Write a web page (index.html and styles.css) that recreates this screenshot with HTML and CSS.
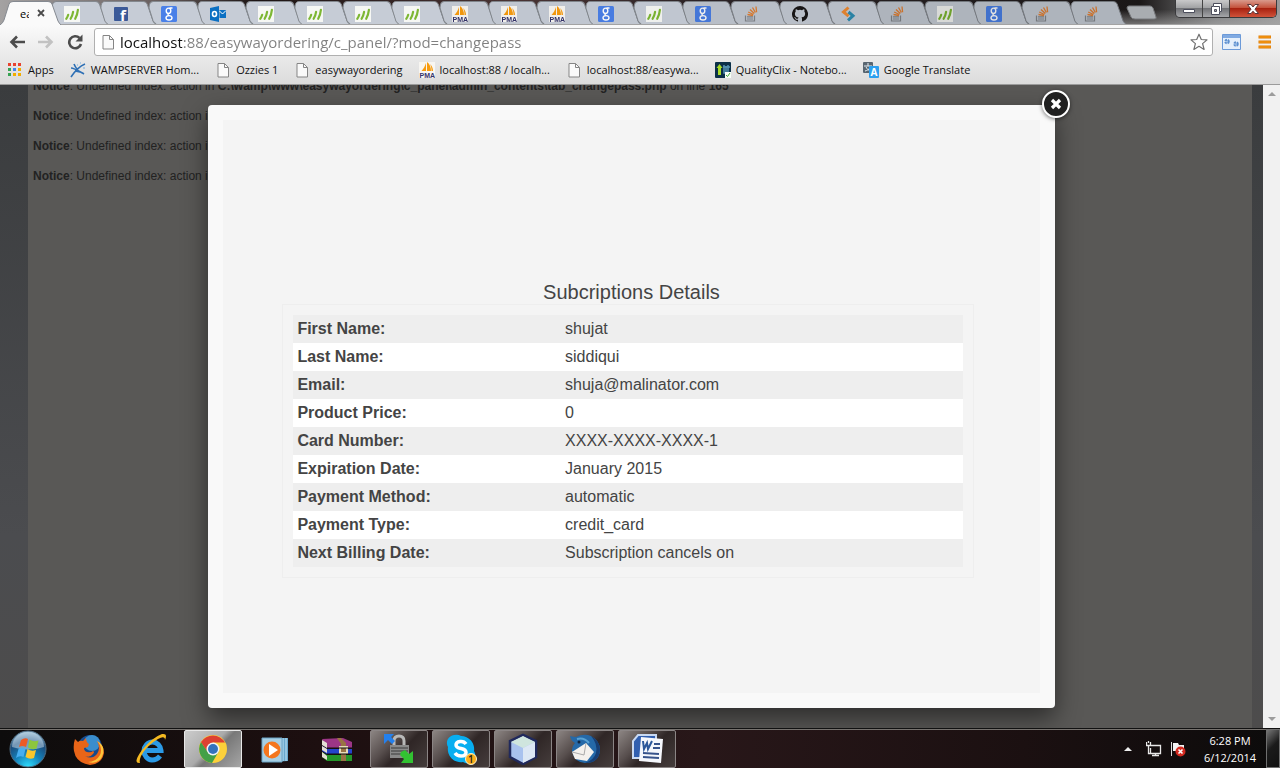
FILE: index.html
```html
<!DOCTYPE html>
<html lang="en">
<head>
<meta charset="utf-8">
<title>easywayordering</title>
<link rel="stylesheet" href="styles.css">
</head>
<body>
<svg class="sprite" aria-hidden="true">
  <symbol id="bars" viewBox="0 0 16 16"><path fill="#f6f7f4" d="M0 0h16v16H0z"/><path d="M2.300 12.800q1.200-1.500 1.900-4M6.600 12.800q2-3.500 2.500-7M11.200 12.800q2.200-4 2.700-9" fill="none" stroke="#7db733" stroke-width="2.200" stroke-linecap="round"/></symbol>
  <symbol id="fb" viewBox="0 0 16 16"><rect x="1" y="1" width="14" height="14" rx="1" fill="#3b5998"/><text x="7" y="15" font-family="Open Sans, sans-serif" font-weight="700" font-size="15" fill="#fff">f</text></symbol>
  <symbol id="goog" viewBox="0 0 16 16"><rect width="16" height="16" rx="1.500" fill="#4a80e8"/><g fill="none" stroke="#fff" stroke-width="1.400"><ellipse cx="7.500" cy="4.800" rx="2.300" ry="2.700"/><path d="M8.500 2H11.500M8 7.500q-2 1.200 0 2.200"/><ellipse cx="8" cy="11.800" rx="3" ry="2.200"/></g></symbol>
  <symbol id="outl" viewBox="0 0 16 16"><path fill="#0b6fc2" d="M0 2 9 0v16L0 14z"/><path fill="#0b6fc2" d="M9.500 4H16v8H9.500z"/><path d="m9.500 5 3 3L16 4.500" fill="none" stroke="#fff"/><ellipse cx="4.500" cy="8" rx="2" ry="2.500" fill="none" stroke="#fff" stroke-width="1.600"/></symbol>
  <symbol id="pma" viewBox="0 0 16 16"><path fill="#f8f6f2" d="M0 0h16v16H0z"/><path fill="#f89c0e" d="M7 1v8H2.500C4.500 7 6 4 7 1zM8 0c3 2 4 6 4 9H8zM11 2c2 2 3 4 3 7h-1.500C12.500 6 12 4 11 2z"/><text x="0.500" y="16" font-family="Liberation Sans, sans-serif" font-weight="700" font-size="7" fill="#34346b">PMA</text></symbol>
  <symbol id="so" viewBox="0 0 16 16"><path d="M2.500 9.500v5.500h9V9.500M4 13h6M4 10.800h6" fill="none" stroke="#84888d" stroke-width="1.200"/><path d="m4.500 8.500 5.500 1M5.200 6l5.200 2.500M7 3.500l4.300 3.900M9.500 1.500l2.900 5M13 .5l.6 5.800" stroke="#e58132" stroke-width="1.300"/></symbol>
  <symbol id="gh" viewBox="0 0 16 16"><path fill="#191717" d="M8 0a8 8 0 0 0-2.530 15.590c.4.070.55-.17.55-.38v-1.490c-2.230.48-2.700-.95-2.700-.95-.36-.92-.89-1.170-.89-1.170-.73-.5.050-.49.050-.49.810.060 1.230.83 1.230.83.720 1.230 1.880.87 2.340.67.070-.52.280-.87.510-1.070-1.780-.2-3.640-.89-3.640-3.950 0-.87.310-1.590.820-2.150-.08-.2-.36-1.020.080-2.120 0 0 .67-.21 2.200.82a7.600 7.600 0 0 1 4 0c1.530-1.040 2.200-.82 2.200-.82.440 1.100.160 1.920.080 2.120.510.560.820 1.270.820 2.150 0 3.070-1.870 3.750-3.650 3.950.290.250.540.730.540 1.480v2.190c0 .21.150.46.550.38A8 8 0 0 0 8 0z"/></symbol>
  <symbol id="sublime" viewBox="0 0 16 16"><path d="M8.500 1.500 3.500 6l5 4.200" fill="none" stroke="#ef8b32" stroke-width="3"/><path d="M8.500 6 13 9.800l-5 4.500" fill="none" stroke="#2d8cb0" stroke-width="3"/></symbol>
  <symbol id="doc" viewBox="0 0 16 16"><path d="M3 1.500h6.500l4 4v9.500H3z" fill="#fafafa" stroke="#858585"/><path d="M9.500 1.500v4h4" fill="none" stroke="#858585"/></symbol>
  <symbol id="apps" viewBox="0 0 16 16"><path fill="#e8432f" d="M1 1h3v3H1zM6 1h3v3H6zM11 1h3v3h-3z"/><path fill="#36a352" d="M1 6h3v3H1zM1 11h3v3H1z"/><path fill="#4285ee" d="M6 6h3v3H6z"/><path fill="#f2ad00" d="M11 6h3v3h-3zM6 11h3v3H6zM11 11h3v3h-3z"/></symbol>
  <symbol id="wamp" viewBox="0 0 16 16"><path d="M1 15C5 9 10 4 15 2M1 6c3 0 6 2 13 6M4 2c1 3 2 4 4 6M5 9l5 1" fill="none" stroke="#2f70b5" stroke-width="1.600"/><path d="M7 3h1M10 1h1M13 6h2" stroke="#75aee0"/></symbol>
  <symbol id="qc" viewBox="0 0 16 16"><rect width="16" height="16" rx="1" fill="#0b3048"/><path d="m4.500 2 3 4H6v7H3V6H1.500z" fill="#a8dc28"/><path d="M8 5h7M9 3v8h2V4M13 3v7" stroke="#5794b5" stroke-width="1.500" fill="none"/><path fill="#f8fff8" d="M10 10h6v6h-6z"/><path d="m11 13 1.500 1.500L15 11" fill="none" stroke="#41aa35"/></symbol>
  <symbol id="trans" viewBox="0 0 16 16"><rect width="10" height="11" rx="1" fill="#586570"/><path d="M1 4h8M5 1v3M2 9c4-1 5-3 5-5M3 5c1 2 3 4 5 4" stroke="#e4edf2" fill="none"/><rect x="6" y="4" width="10" height="12" rx="1" fill="#2b9ff0"/><text x="7.500" y="14" font-family="Open Sans, sans-serif" font-size="10" font-weight="700" fill="#fff">A</text></symbol>
</svg>

<header class="chrome">
  <div class="strip">
    <nav class="tabs" aria-label="Tabs">
      <div class="tab active"><span>ea</span><button class="x" aria-label="Close tab"><svg viewBox="0 0 8 8"><path d="m1 1 6 6M7 1 1 7" stroke="#4b4b4b" stroke-width="1.800"/></svg></button></div>
      <button class="tab" aria-label="Tab"><svg><use href="#bars"/></svg></button>
      <button class="tab" aria-label="Tab"><svg><use href="#fb"/></svg></button>
      <button class="tab" aria-label="Tab"><svg><use href="#goog"/></svg></button>
      <button class="tab" aria-label="Tab"><svg><use href="#outl"/></svg></button>
      <button class="tab" aria-label="Tab"><svg><use href="#bars"/></svg></button>
      <button class="tab" aria-label="Tab"><svg><use href="#bars"/></svg></button>
      <button class="tab" aria-label="Tab"><svg><use href="#bars"/></svg></button>
      <button class="tab" aria-label="Tab"><svg><use href="#bars"/></svg></button>
      <button class="tab" aria-label="Tab"><svg><use href="#pma"/></svg></button>
      <button class="tab" aria-label="Tab"><svg><use href="#pma"/></svg></button>
      <button class="tab" aria-label="Tab"><svg><use href="#pma"/></svg></button>
      <button class="tab" aria-label="Tab"><svg><use href="#goog"/></svg></button>
      <button class="tab" aria-label="Tab"><svg><use href="#bars"/></svg></button>
      <button class="tab" aria-label="Tab"><svg><use href="#goog"/></svg></button>
      <button class="tab" aria-label="Tab"><svg><use href="#so"/></svg></button>
      <button class="tab" aria-label="Tab"><svg><use href="#gh"/></svg></button>
      <button class="tab" aria-label="Tab"><svg><use href="#sublime"/></svg></button>
      <button class="tab" aria-label="Tab"><svg><use href="#so"/></svg></button>
      <button class="tab" aria-label="Tab"><svg><use href="#bars"/></svg></button>
      <button class="tab" aria-label="Tab"><svg><use href="#goog"/></svg></button>
      <button class="tab" aria-label="Tab"><svg><use href="#so"/></svg></button>
      <button class="tab" aria-label="Tab"><svg><use href="#so"/></svg></button>
    </nav>
    <button class="newtab" aria-label="New tab"><svg viewBox="0 0 32 16"><path d="M3 1h21q2 0 3 2l3 9q1 2-2 2H9q-3 0-4-2L1 3q0-2 2-2z" fill="#a9adb1" stroke="#77797c"/></svg></button>
    <div class="winctl">
      <button aria-label="Minimize"><svg viewBox="0 0 14 14"><path d="M1.500 7.500h11v3h-11z" fill="#fff" stroke="#4c4e5c"/></svg></button>
      <button aria-label="Restore"><svg viewBox="0 0 14 14"><path d="M4.500 1.500h8v8h-2v3h-8v-8h2z" fill="#fff" stroke="#4c4e5c"/><path d="M5.500 7.500h2v2h-2z" fill="#aaa" stroke="#4c4e5c"/><path d="M5 4.500h5.500V9" fill="none" stroke="#4c4e5c"/></svg></button>
      <button class="close" aria-label="Close"><svg viewBox="0 0 14 14"><path d="M1.500 2.500h3.500l2 2.500 2-2.500h3.500L9 7.200l3.500 4.300H9L7 9.200l-2 2.300H1.500L5 7.200z" fill="#fff" stroke="#5b3538"/></svg></button>
    </div>
  </div>
  <div class="toolbar">
    <button class="nav" aria-label="Back"><svg viewBox="0 0 16 16"><path d="M16 8H3M8 2.500 2.500 8 8 13.500" fill="none" stroke="#4c4c4c" stroke-width="2.600"/></svg></button>
    <button class="nav" aria-label="Forward"><svg viewBox="0 0 16 16"><path d="M0 8h13M8 2.500 13.500 8 8 13.500" fill="none" stroke="#c2c2c2" stroke-width="2.600"/></svg></button>
    <button class="nav" aria-label="Reload"><svg viewBox="0 0 16 16"><path d="M12.500 4A6 6 0 1 0 14 10" fill="none" stroke="#4c4c4c" stroke-width="2.600"/><path d="M15.500.5v7h-7z" fill="#4c4c4c"/></svg></button>
    <div class="omnibox">
      <svg class="ic"><use href="#doc"/></svg>
      <input class="url" type="text" aria-label="Address" value="localhost:88/easywayordering/c_panel/?mod=changepass">
      <button class="star" aria-label="Bookmark this page"><svg viewBox="0 0 18 18"><path d="m9 1.200 2.300 5.300 5.700.4-4.400 3.700 1.500 5.800L9 13.300l-5.100 3.100 1.500-5.800L1 6.900l5.700-.4z" fill="#fff" stroke="#6f6f6f" stroke-width="1.200" stroke-linejoin="round"/></svg></button>
    </div>
    <button class="ext" aria-label="Extension"><svg viewBox="0 0 20 16"><path d="M.5.5h18v15H.5z" fill="#e6f0fb" stroke="#6c9ad8"/><path fill="#80aae2" d="M1 1h17v3H1z"/><circle cx="5" cy="7.500" r="1.800" fill="#b5d0ef" stroke="#5e90cf" stroke-width="2" stroke-dasharray="2 .8"/><circle cx="14" cy="10" r="1.800" fill="#b5d0ef" stroke="#5e90cf" stroke-width="2" stroke-dasharray="2 .8"/></svg></button>
    <button class="menu" aria-label="Menu"><svg viewBox="0 0 14 14"><path d="M.5 2h12.500M.5 7h12.500M.5 12h12.500" stroke="#e07b00" stroke-width="3"/><path d="M1 2h11.500M1 7h11.500M1 12h11.500" stroke="#fba21d"/></svg></button>
  </div>
  <nav class="bookmarks" aria-label="Bookmarks">
    <a href="#"><svg class="ic"><use href="#apps"/></svg>Apps</a>
    <a href="#"><svg class="ic"><use href="#wamp"/></svg>WAMPSERVER Hom...</a>
    <a href="#"><svg class="ic"><use href="#doc"/></svg>Ozzies 1</a>
    <a href="#"><svg class="ic"><use href="#doc"/></svg>easywayordering</a>
    <a href="#"><svg class="ic"><use href="#pma"/></svg>localhost:88 / localh...</a>
    <a href="#"><svg class="ic"><use href="#doc"/></svg>localhost:88/easywa...</a>
    <a href="#"><svg class="ic"><use href="#qc"/></svg>QualityClix - Notebo...</a>
    <a href="#"><svg class="ic"><use href="#trans"/></svg>Google Translate</a>
  </nav>
</header>

<div class="view">
  <main class="stage">
    <div class="page">
      <p><b>Notice</b>: Undefined index: action in <b>C:\wamp\www\easywayordering\c_panel\admin_contents\tab_changepass.php</b> on line <b>165</b></p>
      <p><b>Notice</b>: Undefined index: action in</p>
      <p><b>Notice</b>: Undefined index: action in</p>
      <p><b>Notice</b>: Undefined index: action in</p>
    </div>
    <section class="modal" role="dialog" aria-labelledby="title">
      <button class="dismiss" aria-label="Close"><svg viewBox="0 0 30 30"><circle cx="15" cy="15" r="13" fill="#202020" stroke="#fff" stroke-width="2"/><path d="m11 11 8 8M19 11l-8 8" stroke="#fff" stroke-width="3.200"/></svg></button>
      <div class="inner">
        <h1 id="title">Subcriptions Details</h1>
        <div class="box">
          <table>
            <tbody>
              <tr><th scope="row">First Name:</th><td>shujat</td></tr>
              <tr><th scope="row">Last Name:</th><td>siddiqui</td></tr>
              <tr><th scope="row">Email:</th><td>shuja@malinator.com</td></tr>
              <tr><th scope="row">Product Price:</th><td>0</td></tr>
              <tr><th scope="row">Card Number:</th><td>XXXX-XXXX-XXXX-1</td></tr>
              <tr><th scope="row">Expiration Date:</th><td>January 2015</td></tr>
              <tr><th scope="row">Payment Method:</th><td>automatic</td></tr>
              <tr><th scope="row">Payment Type:</th><td>credit_card</td></tr>
              <tr><th scope="row">Next Billing Date:</th><td>Subscription cancels on</td></tr>
            </tbody>
          </table>
        </div>
      </div>
    </section>
  </main>
  <div class="scroll" aria-hidden="true">
    <svg viewBox="0 0 8 4"><path d="M0 4 4 0l4 4z" fill="#9c9c9c"/></svg>
    <svg viewBox="0 0 8 4"><path d="M0 0h8L4 4z" fill="#9c9c9c"/></svg>
  </div>
</div>

<footer class="taskbar">
  <button class="start" aria-label="Start"><svg viewBox="0 0 38 38">
    <defs><radialGradient id="orb" cx=".5" cy="1" r=".95"><stop offset="0" stop-color="#2fe0ff"/><stop offset=".4" stop-color="#1583bb"/><stop offset=".75" stop-color="#1b4c7c"/><stop offset="1" stop-color="#8db4cc"/></radialGradient></defs>
    <circle cx="19" cy="19" r="18" fill="url(#orb)" stroke="#4d6a80"/><path d="M3 17a16 15 0 0 1 32 0q-16 5-32 0z" fill="#cfe2ee" opacity=".5"/>
    <path d="M12 10q4-3 7-1l-2 8q-4-2-7 0z" fill="#ec5a25"/><path d="M20.500 9.500q4 3 9 1l-2 8q-4 2-8.500-1z" fill="#8cc63e"/><path d="M9.500 19q4-2 7 0l-2 8q-4-2-7.500 1z" fill="#46aef0"/><path d="M18.500 19q4 3 8.500 1l-2 8q-4 2-8.500-1z" fill="#fcc62c"/></svg></button>
  <button class="task" aria-label="Firefox"><svg viewBox="0 0 32 32"><circle cx="17" cy="14" r="12" fill="#174a8c"/><circle cx="19" cy="10" r="8" fill="#3a8dcd"/><path d="M2 6l3 3q2-2 5-1l3-3q0 4 3 6l-1 3-4 1q0 3 3 4 4 1 6-1 2 1 0 3-3 4-8 2 7 4 12-2 4-6 0-13 7 4 7 12-2 11-14 12Q3 30 1 18q-1-6 1-12z" fill="#e96518"/><path d="M24 8q6 6 3 14-4 7-12 7 12 3 15-8 2-9-6-13z" fill="#fcc53a"/></svg></button>
  <button class="task" aria-label="Internet Explorer"><svg viewBox="0 0 32 32"><path d="M25 23q-3 4-8 4a8.500 9 0 1 1 9-9.500H9" fill="none" stroke="#2b9ae6" stroke-width="5"/><path d="M5 30q-8 1 2-13Q18 4 27 1q6-1 3 6 0-5-7-1Q12 12 6 23q-2 5-1 7z" fill="#f5b921"/></svg></button>
  <button class="task on current" aria-label="Chrome"><svg viewBox="0 0 32 32"><circle cx="16" cy="16" r="14" fill="#fcd03a"/><path d="M4 9a14 14 0 0 0 11 21l7-12-11 1z" fill="#43a047"/><path d="M4 9A14 14 0 0 1 28 9.500H16L10 18z" fill="#dd4132"/><circle cx="16" cy="16" r="6.500" fill="#f2f4f6"/><circle cx="16" cy="16" r="5" fill="#3472bd"/></svg></button>
  <button class="task" aria-label="Media Player"><svg viewBox="0 0 32 32"><path d="M10 5h19v23l-19 1z" fill="#69a8cd"/><path d="M24 5v23M27 5v23" stroke="#c4e3f4"/><path d="M3 5h20v24H3z" fill="#a7cfe4" stroke="#6ba3c4"/><circle cx="13" cy="17" r="8.500" fill="#f4761e"/><path d="m10 11 9 6-9 6z" fill="#fff"/></svg></button>
  <button class="task" aria-label="WinRAR"><svg viewBox="0 0 32 32"><path d="m1 6 21-1 9 4v6H6z" fill="#9c3686"/><path d="M1 13 6 16h25v5H6l-5-3z" fill="#2444cc"/><path d="m1 19 5 3h25v6H6l-5-4z" fill="#24962a"/><path d="m1 7 5 3v5l-5-3zM1 13l5 3v4l-5-3zM1 19l5 4v4l-5-3z" fill="#e5dfd5"/><path d="M16 5h4l5 5v18h-5V11z" fill="#997344"/><path d="M19 14h7v6h-7z" fill="none" stroke="#e7dcb8" stroke-width="2"/><path d="M6 15h25M6 21h25" stroke="#111"/></svg></button>
  <button class="task on" aria-label="Secure transfer"><svg viewBox="0 0 32 32"><path d="M11 14V8q0-5 5-5t5 5v6" fill="none" stroke="#b8b8b8" stroke-width="3"/><path d="M7 12h19v13H7z" fill="#8a8a8a"/><path d="M8 15h17M8 18h17M8 21h17" stroke="#555" stroke-width="1.500"/><path d="M1 1h10L8 4l4 4-3 3-4-4-4 4z" fill="#2480ed"/><path d="m18 19 4-2 4 4 4-3v12H18l3-4-4-4z" fill="#32c232"/></svg></button>
  <button class="task on" aria-label="Skype"><svg viewBox="0 0 32 32"><path d="M9 2q4-1 7 1a13 13 0 0 1 13 15 8 8 0 0 1-11 11A13 13 0 0 1 3 14 8 8 0 0 1 9 2z" fill="#08aef0"/><path d="M21 11q-2-3-6-2.500-4 .5-4 3.500 0 2.500 5 3.500t5 4q0 3.500-5 3.500-4 0-6-3" fill="none" stroke="#fff" stroke-width="3.500"/><circle cx="26" cy="26" r="5.500" fill="#fcae18" stroke="#fff2c8"/><text x="23" y="29.500" font-family="Open Sans, sans-serif" font-size="10" font-weight="600" fill="#222">1</text></svg></button>
  <button class="task on" aria-label="VirtualBox"><svg viewBox="0 0 32 32"><path d="m16 2 13 6v16l-13 7-13-7V8z" fill="#a9c2ee" stroke="#20295c" stroke-width="2.500"/><path d="m16 3 12 6-12 6L4 9z" fill="#cfe5de"/><path d="m16 15 12-6v15l-12 6z" fill="#dce7f4"/></svg></button>
  <button class="task on" aria-label="Thunderbird"><svg viewBox="0 0 32 32"><path d="M1 3q4 1 6 1 8-4 15-1 9 5 9 14-1 13-15 13Q5 29 3 18q0-5 3-8-4-2-5-7z" fill="#2569a8"/><path d="M22 3q9 5 9 14-1 13-15 13 9-3 11-10 2-9-5-17z" fill="#173f75"/><path d="M8 6q7-2 12 4" fill="none" stroke="#58a2d4" stroke-width="2"/><circle cx="10" cy="9" r="1.500" fill="#102540"/><path d="m3 19 14-9 8 9-7 9-12-2z" fill="#f4f1ed"/><path d="m3 19 12 3 2-12" fill="none" stroke="#aaa"/></svg></button>
  <button class="task on" aria-label="Word"><svg viewBox="0 0 32 32"><path d="M7 2h18v23H2V8z" fill="#315fb0" stroke="#c9d9f2" stroke-width="2"/><path d="m10 4 22 2-2 24-22-2z" fill="#f5f7fc"/><path d="M23 11h6M22 15h7M12 20l16 1M12 24l16 1" stroke="#37538b" stroke-width="2"/><path d="m12 8 1 8 3-6 1 6 4-8" fill="none" stroke="#2b579a" stroke-width="2"/></svg></button>
  <div class="tray">
    <button class="up" aria-label="Show hidden icons"><svg viewBox="0 0 8 4"><path d="M0 4 4 0l4 4z" fill="#eee"/></svg></button>
    <svg class="ic" viewBox="0 0 16 16"><path d="M5 4.500h9.500v8H4.500V7M9.500 12.500v2M6 14.500h7M.5 1v3.500h4V1M2.500 4.500v8h2M2.500 0v2" fill="none" stroke="#e8e8e8" stroke-width="1.300"/></svg>
    <svg class="ic" viewBox="0 0 16 16"><path d="M1.500 1v14" stroke="#ddd"/><path d="M3 2h5l1 2h5v6H3z" fill="#f4f4f4"/><circle cx="10.500" cy="10.500" r="5" fill="#d32a20"/><path d="m8.500 8.500 4 4M12.500 8.500l-4 4" stroke="#fff" stroke-width="1.600"/></svg>
    <time class="clock"><span>6:28 PM</span><span>6/12/2014</span></time>
    <button class="desk" aria-label="Show desktop"></button>
  </div>
</footer>
</body>
</html>
```

FILE: styles.css
```css
* { box-sizing: border-box; }
body {
  margin: 0;
  min-height: 100vh;
  display: flex;
  flex-direction: column;
  font-family: "Liberation Sans", Arial, sans-serif;
  overflow-x: hidden;
}
button {
  border: 0;
  padding: 0;
  margin: 0;
  background: none;
  font: inherit;
  display: flex;
  align-items: center;
  justify-content: center;
}
svg { display: block; flex: none; }
.sprite { display: none; }
.ic { width: 16px; height: 16px; }

/* tab strip */
.strip {
  height: 24px;
  display: flex;
  align-items: flex-start;
  background:
    linear-gradient(#0000 40%, #aaa9 100%) right / 160px 100% no-repeat,
    linear-gradient(90deg, #a4a2a2 0, #6a6060 12%, #1c1414 20%, #4a3434 40%, #2b2326 55%, #1a1717 89%, #77787a 95%, #999 100%);
}
.tabs { flex: 1; min-width: 0; display: flex; align-items: flex-start; padding-top: 1px; }
.tab {
  flex: 1 1 0;
  min-width: 0;
  height: 23px;
  margin-left: -12px;
  justify-content: flex-start;
  padding-left: 17px;
  background: url("data:image/svg+xml,%3Csvg xmlns='http://www.w3.org/2000/svg' viewBox='0 0 61 23' preserveAspectRatio='none'%3E%3Cpath d='M12 23 Q10 22 9 20 L5 7 Q5 .5 9 .5 L48 .5 Q51 .5 52 3 L58 20 Q59 22 61 23' fill='%23c6ccd6' stroke='%2384898f'/%3E%3C/svg%3E") 0 0 / 100% 100%;
}
.tab:nth-child(n+10) { filter: brightness(.97); }
.tab:nth-child(n+15) { filter: brightness(.93); }
.tab:nth-child(n+19) { filter: brightness(.88); }
.tab svg { width: 16px; height: 16px; margin-top: 2px; }
.tab.active {
  flex: 0 0 61px;
  height: 24px;
  margin-left: 0;
  margin-right: -2px;
  display: flex;
  align-items: center;
  gap: 8px;
  padding-left: 20px;
  z-index: 1;
  font: 11px "Open Sans", sans-serif;
  background-image: url("data:image/svg+xml,%3Csvg xmlns='http://www.w3.org/2000/svg' viewBox='0 0 61 24' preserveAspectRatio='none'%3E%3Cpath d='M0 24 Q3 22 4 19 L9 3 Q10 .5 13 .5 L48 .5 Q51 .5 52 3 L58 20 Q59 22 61 24' fill='%23fafafa' stroke='%23858a91'/%3E%3C/svg%3E");
}
.tab.active span { width: 9px; overflow: hidden; }
.tab .x svg { width: 8px; height: 8px; margin-top: 0; }
.newtab { width: 31px; margin: 5px 18px 0 0; }
.newtab svg { width: 32px; height: 16px; }
.winctl {
  display: flex;
  height: 18px;
  margin-right: 3px;
  border: 1px solid #3a3a3c;
  border-top: 0;
  border-radius: 0 0 5px 5px;
  overflow: hidden;
}
.winctl button {
  width: 27px;
  border-right: 1px solid #444;
  background: linear-gradient(#c9c9ca 0, #a2a3a5 45%, #717276 50%, #a5a6a9 100%);
}
.winctl svg { width: 14px; height: 14px; }
.winctl .close {
  width: 46px;
  border: 0;
  background: linear-gradient(#d99a8d 0, #c4523c 45%, #a82211 50%, #d0533a 100%);
}

/* toolbar */
.chrome { flex: none; }
.toolbar {
  height: 33px;
  display: flex;
  align-items: center;
  padding: 2px 8px 0 9px;
  border-top: 1px solid #a3a3a3;
  background: linear-gradient(#fafafa, #e9e9e9);
}
.nav { margin-right: 13px; }
.nav svg { width: 16px; height: 16px; }
.nav:nth-child(3) { margin-right: 11px; }
.omnibox {
  flex: 1;
  height: 28px;
  display: flex;
  align-items: center;
  padding: 0 4px 0 5px;
  border: 1px solid #b0b0b0;
  border-radius: 3px;
  background: #fff;
}
.url {
  flex: 1;
  min-width: 0;
  border: 0;
  padding: 0;
  margin-left: 4px;
  outline: 0;
  font: 15px/20px "Open Sans", sans-serif;
  color: transparent;
  background: linear-gradient(90deg, #111 62px, #808080 62px);
  -webkit-background-clip: text;
  background-clip: text;
}
.star svg { width: 18px; height: 18px; }
.ext { margin: 0 16px 0 9px; }
.ext svg { width: 20px; height: 16px; }
.menu svg { width: 14px; height: 14px; }
.bookmarks {
  height: 28px;
  display: flex;
  align-items: center;
  gap: 16px;
  padding: 0 7px 2px;
  border-bottom: 1px solid #9b9b9b;
  background: linear-gradient(#e9e9e9, #dcdcdc);
  overflow: hidden;
}
.bookmarks a {
  display: flex;
  align-items: center;
  gap: 5px;
  white-space: nowrap;
  color: #111;
  text-decoration: none;
  font: 11px/16px "Open Sans", sans-serif;
}

/* page area */
.view { flex: 1; display: flex; }
.stage {
  flex: 1;
  min-width: 0;
  display: grid;
  overflow: hidden;
  background: linear-gradient(#3a3c3e, #4b4c4f 70%, #4d4c4c);
}
.page, .modal { grid-area: 1 / 1; }
.page {
  margin: 0 11px 0 28px;
  padding: 0 5px;
  background: #595856;
  color: #222;
  font-size: 12px;
  line-height: 15px;
  overflow: hidden;
}
.page p { margin: 0 0 15px; white-space: nowrap; }
.page p:first-child { margin-top: -6px; }
.modal {
  position: relative;
  justify-self: center;
  width: 67%;
  min-width: 720px;
  margin: 20px 0;
  padding: 15px;
  border-radius: 4px;
  background: #f9f9f9;
  box-shadow: 0 10px 25px rgba(0, 0, 0, .5);
  display: flex;
}
.inner {
  flex: 1;
  padding: 160px 66px 115px 59px;
  background: #f4f4f4;
  color: #444;
}
.dismiss { position: absolute; top: -16px; right: -16px; filter: drop-shadow(0 1px 2px #0008); }
.dismiss svg { width: 30px; height: 30px; }
h1 {
  margin: 0 0 0 7px;
  font-size: 20px;
  line-height: 24px;
  font-weight: 400;
  text-align: center;
}
.box { padding: 10px; border: 1px solid #eee; }
table { width: 100%; border-collapse: collapse; font-size: 16px; line-height: 20px; }
th, td { padding: 4px; text-align: left; font-weight: 400; }
th { width: 40%; font-weight: 700; }
tr { background: #fff; }
tr:nth-child(odd) { background: #eee; }
.scroll {
  flex: 0 0 17px;
  display: flex;
  flex-direction: column;
  justify-content: space-between;
  align-items: center;
  padding: 7px 0;
  background: #f1f1f1;
}
.scroll svg { width: 8px; height: 4px; }

/* taskbar */
.taskbar {
  flex: none;
  height: 40px;
  display: flex;
  align-items: center;
  gap: 4px;
  border-top: 1px solid #111;
  box-shadow: inset 0 1px #77736f;
  background: linear-gradient(90deg, #0d0c0c, #1d0f10 25%, #281719 55%, #1b1011 80%, #0c0b0b);
}
.start { width: 56px; }
.start svg { width: 38px; height: 38px; }
.task { width: 58px; height: 38px; border-radius: 2px; }
.task svg { width: 32px; height: 32px; }
.on {
  border: 1px solid #8b8585;
  background: linear-gradient(135deg, #8c8583 0, #574e4d 35%, #2f2626 55%, #453d3c 100%);
}
.current { border-color: #e8e8e8; background: linear-gradient(135deg, #ccc 0, #aaa 45%, #787878 55%, #a6a6a6 100%); }
.tray { margin-left: auto; align-self: stretch; display: flex; align-items: center; color: #fff; }
.tray .ic { margin-right: 8px; }
.up { margin-right: 14px; }
.up svg { width: 8px; height: 4px; }
.clock {
  width: 72px;
  display: flex;
  flex-direction: column;
  text-align: center;
  font: 11px/17px "Open Sans", sans-serif;
}
.desk {
  width: 14px;
  align-self: stretch;
  border: 1px solid #6f6f6f;
  background: linear-gradient(135deg, #777, #1b1b1b 45%, #111);
}
```
